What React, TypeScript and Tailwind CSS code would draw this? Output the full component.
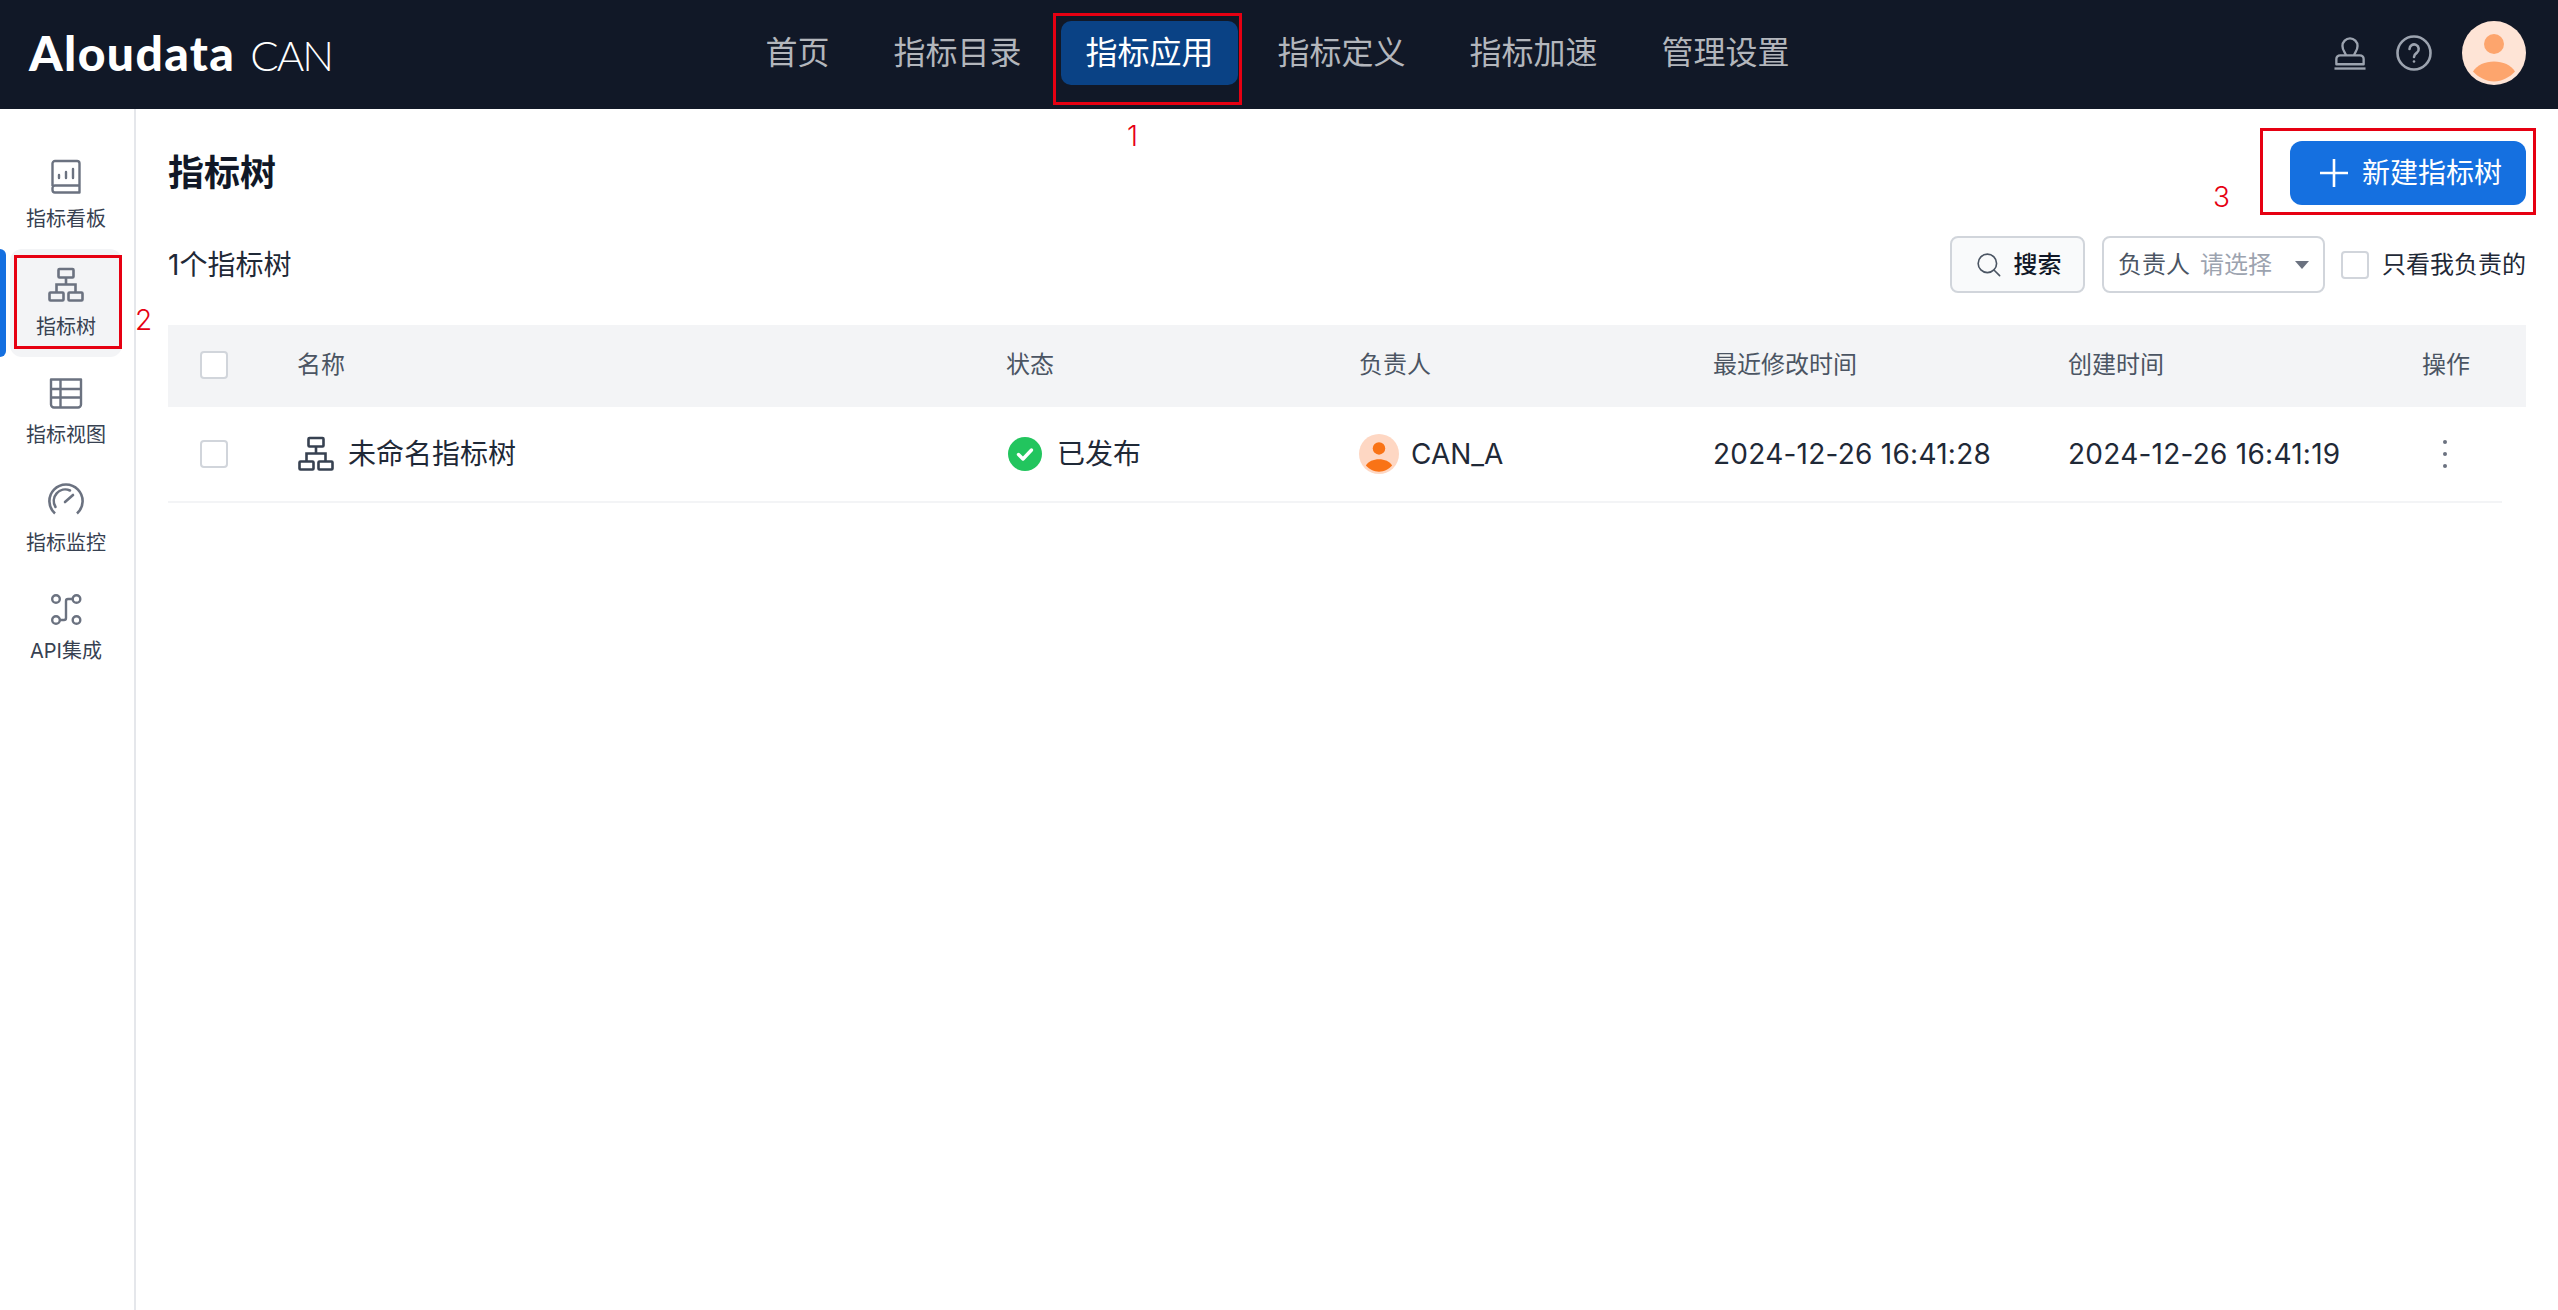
const fontStack = { fontFamily: 'Inter, "Noto Sans CJK SC", sans-serif' };

const navItems = ["首页", "指标目录", "指标应用", "指标定义", "指标加速", "管理设置"];

function BoardIcon() {
  return (
    <svg width="36" height="36" viewBox="0 0 36 36" fill="none" stroke="#6b7280" strokeWidth="2.4">
      <path d="M4.500 27V4.500A2.500 2.500 0 0 1 7 2h22A2.500 2.500 0 0 1 31.500 4.500V33.500H7A2.500 2.500 0 0 1 4.500 31v-2A2.500 2.500 0 0 1 7 26.500H31.500" strokeLinejoin="round" />
      <path d="M11 19v-3M18 19v-6M25 19v-9" strokeLinecap="round" />
    </svg>
  );
}

function TreeIcon({ color = "#6b7280", size = 36 }: { color?: string; size?: number }) {
  return (
    <svg width={size} height={size} viewBox="0 0 36 36" fill="none" stroke={color} strokeWidth="2.6">
      <rect x="10.500" y="2" width="15" height="8.500" rx="1" />
      <rect x="1.500" y="25.500" width="14" height="8" rx="1" />
      <rect x="20.500" y="25.500" width="14" height="8" rx="1" />
      <path d="M18 10.500V17.500M8.500 25.500V17.500H27.500V25.500" />
    </svg>
  );
}

function TableIcon() {
  return (
    <svg width="36" height="36" viewBox="0 0 36 36" fill="none" stroke="#6b7280" strokeWidth="2.4">
      <path d="M3 4.500h30v25a3 3 0 0 1-3 3H6a3 3 0 0 1-3-3v-25z" strokeLinejoin="round" />
      <path d="M3 14h30M3 22.500h30M12.500 4.500v28" />
    </svg>
  );
}

function GaugeIcon() {
  return (
    <svg width="36" height="36" viewBox="0 0 36 36" fill="none" stroke="#6b7280" strokeWidth="2.600" strokeLinecap="butt">
      <path d="M7 30.500A16.600 16.600 0 1 1 29 30.500" />
      <path d="M7.500 24A11.500 11.500 0 0 1 22 7.500" strokeLinecap="round" />
      <path d="M17 19l8-7" strokeLinecap="round" />
    </svg>
  );
}

function ApiIcon() {
  return (
    <svg width="36" height="36" viewBox="0 0 36 36" fill="none" stroke="#6b7280" strokeWidth="2.4">
      <circle cx="8" cy="8" r="3.800" />
      <circle cx="28.500" cy="8" r="3.800" />
      <circle cx="8" cy="29" r="3.800" />
      <circle cx="28.500" cy="29" r="3.800" />
      <path d="M24.700 8H20a2 2 0 0 0-2 2v17a2 2 0 0 1-2 2h-4.200" />
    </svg>
  );
}

function StampIcon() {
  return (
    <svg width="32" height="34" viewBox="0 0 34 36" fill="none" stroke="#9ca3af" strokeWidth="2.500">
      <path d="M12.500 20.500c0-3-3.500-4.500-3.500-10a8 8 0 0 1 16 0c0 5.500-3.500 7-3.500 10" />
      <path d="M2.500 30v-5.500a4 4 0 0 1 4-4h21a4 4 0 0 1 4 4V30z" strokeLinejoin="round" />
      <path d="M0.500 34.500h33" />
    </svg>
  );
}

function HelpIcon() {
  return (
    <svg width="36" height="36" viewBox="0 0 36 36" fill="none" stroke="#9ca3af" strokeWidth="2.600">
      <circle cx="18" cy="18" r="16.500" />
      <path d="M13.500 14a4.600 4.600 0 1 1 7.500 3.600c-1.700 1.300-3 2.100-3 4.400" strokeLinecap="round" />
      <circle cx="18" cy="26.500" r="1.300" fill="#9ca3af" stroke="none" />
    </svg>
  );
}

function Avatar({ size, bg, fg }: { size: number; bg: string; fg: string }) {
  return (
    <svg width={size} height={size} viewBox="0 0 64 64">
      <circle cx="32" cy="32" r="32" fill={bg} />
      <circle cx="32" cy="23" r="10" fill={fg} />
      <path d="M11 50.500C15 44 23 40.500 32 40.500s17 3.500 21 10C48 56 40 60.500 32 60.500S16 56 11 50.500z" fill={fg} />
    </svg>
  );
}

function SearchIcon() {
  return (
    <svg width="26" height="26" viewBox="0 0 24 24" fill="none" stroke="#4b5563" strokeWidth="1.500" strokeLinecap="round">
      <circle cx="10.500" cy="10.500" r="8.500" />
      <path d="M16.800 16.800l5 5" />
    </svg>
  );
}

function Checkbox() {
  return <span className="block w-7 h-7 rounded-[4px] border-2 border-[#d1d5db] bg-white" />;
}

const columns = "grid grid-cols-[129px_709px_353px_354px_355px_354px_1fr] items-center";

export default function App() {
  return (
    <div className="relative w-[2558px] h-[1310px] bg-white overflow-hidden" style={fontStack}>
      {/* Top nav */}
      <header className="h-[109px] bg-[#111827] flex items-center pb-[3px]">
        <div className="flex-1 pl-[29px] flex items-baseline text-white" style={{ fontFamily: 'Lato, sans-serif' }}>
          <span className="text-[48px] font-black leading-none tracking-[1.400px]">Aloudata</span>
          <span className="ml-[15px] text-[42px] font-light leading-none tracking-[-2px]">CAN</span>
        </div>
        <nav className="flex gap-4">
          {navItems.map((item) => (
            <a
              key={item}
              className={
                item === "指标应用"
                  ? "h-16 px-6 flex items-center rounded-[10px] bg-[#0a4285] text-white text-[32px]"
                  : "h-16 px-6 flex items-center rounded-[10px] text-[#b3b6bc] text-[32px]"
              }
            >
              {item}
            </a>
          ))}
        </nav>
        <div className="flex-1 flex items-center justify-end pr-8">
          <StampIcon />
          <span className="ml-[30px] flex">
            <HelpIcon />
          </span>
          <span className="ml-[30px] flex">
            <Avatar size={64} bg="#fee4d6" fg="#fda56d" />
          </span>
        </div>
      </header>

      <div className="flex h-[1201px]">
        {/* Side nav */}
        <aside className="w-[136px] border-r-2 border-[#e5e7eb] pt-8 flex flex-col">
          <SideItem label="指标看板" icon={<BoardIcon />} />
          <SideItem label="指标树" icon={<TreeIcon />} active />
          <SideItem label="指标视图" icon={<TableIcon />} />
          <SideItem label="指标监控" icon={<GaugeIcon />} />
          <SideItem label="API集成" icon={<ApiIcon />} />
        </aside>

        <main className="flex-1 pl-8 pr-8 pt-8">
          <div className="h-16 flex items-center justify-between">
            <h1 className="text-[36px] font-bold text-[#111827]">指标树</h1>
            <button className="w-[236px] h-16 pl-[30px] rounded-xl bg-[#1570e0] text-white text-[28px] flex items-center gap-[14px]">
              <svg width="28" height="28" viewBox="0 0 28 28" stroke="white" strokeWidth="2.600">
                <path d="M14 0v28M0 14h28" />
              </svg>
              新建指标树
            </button>
          </div>

          <div className="mt-[31px] h-[57px] flex items-center">
            <span className="text-[28px] text-[#1f2937]">1个指标树</span>
            <button className="ml-auto w-[135px] h-full pl-[2px] rounded-lg border-2 border-[#d1d5db] bg-[#f9fafb] flex items-center justify-center gap-3 text-[24px] font-medium text-[#111827]">
              <SearchIcon />
              搜索
            </button>
            <div className="ml-[17px] w-[223px] h-full rounded-lg border-2 border-[#d1d5db] flex items-center pl-[14px] text-[24px]">
              <span className="text-[#4b5563]">负责人</span>
              <span className="ml-[10px] text-[#9ca3af]">请选择</span>
              <svg className="ml-[22px]" width="16" height="10" viewBox="0 0 16 10" fill="#6b7280">
                <path d="M1 1h14L8 9z" />
              </svg>
            </div>
            <span className="ml-4">
              <Checkbox />
            </span>
            <span className="ml-[13px] text-[24px] text-[#1f2937]">只看我负责的</span>
          </div>

          {/* Table */}
          <div className={`${columns} mt-8 h-[82px] pb-[3px] bg-[#f3f4f6] text-[24px] text-[#4b5563]`}>
            <span className="pl-8">
              <Checkbox />
            </span>
            <span>名称</span>
            <span>状态</span>
            <span>负责人</span>
            <span>最近修改时间</span>
            <span>创建时间</span>
            <span>操作</span>
          </div>
          <div className={`${columns} mr-6 h-[96px] border-b-2 border-[#f3f4f6] text-[28px] text-[#1f2937]`}>
            <span className="pl-8">
              <Checkbox />
            </span>
            <span className="flex items-center gap-[14px] pl-[1px]">
              <TreeIcon color="#374151" />
              未命名指标树
            </span>
            <span className="flex items-center gap-[15px] pl-[2px]">
              <svg width="34" height="34" viewBox="0 0 34 34">
                <circle cx="17" cy="17" r="17" fill="#22c55e" />
                <path d="M10.500 17.500l4.500 4.500 8.500-9" fill="none" stroke="white" strokeWidth="3.400" strokeLinecap="round" strokeLinejoin="round" />
              </svg>
              已发布
            </span>
            <span className="flex items-center gap-3">
              <Avatar size={40} bg="#fed7c3" fg="#f97316" />
              CAN_A
            </span>
            <span className="tracking-[0.25px]">2024-12-26 16:41:28</span>
            <span className="tracking-[0.25px]">2024-12-26 16:41:19</span>
            <span className="ml-[21px] flex flex-col gap-[8px] w-fit">
              <i className="block w-[4px] h-[4px] rounded-full bg-[#6b7280]" />
              <i className="block w-[4px] h-[4px] rounded-full bg-[#6b7280]" />
              <i className="block w-[4px] h-[4px] rounded-full bg-[#6b7280]" />
            </span>
          </div>
        </main>
      </div>

      {/* Red annotations drawn over the screenshot */}
      <div className="absolute left-[1053px] top-[13px] w-[189px] h-[92px] border-[3px] border-[#e60012] pointer-events-none" />
      <div className="absolute left-[14px] top-[255px] w-[108px] h-[94px] border-[3px] border-[#e60012] pointer-events-none" />
      <div className="absolute left-[2260px] top-[128px] w-[276px] h-[87px] border-[3px] border-[#e60012] pointer-events-none" />
      <span className="absolute left-[1127px] top-[119px] text-[28px] font-light leading-[34px] text-[#e60012]">1</span>
      <span className="absolute left-[135px] top-[303px] text-[28px] font-light leading-[34px] text-[#e60012]">2</span>
      <span className="absolute left-[2213px] top-[180px] text-[28px] font-light leading-[34px] text-[#e60012]">3</span>
    </div>
  );
}

function SideItem({ label, icon, active }: { label: string; icon: React.ReactNode; active?: boolean }) {
  return (
    <div className="relative h-[108px] pl-[10px] pr-3">
      {active && <span className="absolute left-0 top-0 w-[6px] h-full rounded-r-md bg-[#1570e0]" />}
      <div className={active ? "h-full rounded-xl bg-[#f3f4f6] flex flex-col items-center pt-[18px]" : "h-full flex flex-col items-center pt-[18px]"}>
        {icon}
        <span className="mt-[9px] text-[20px] leading-[30px] text-[#374151] whitespace-nowrap">{label}</span>
      </div>
    </div>
  );
}
